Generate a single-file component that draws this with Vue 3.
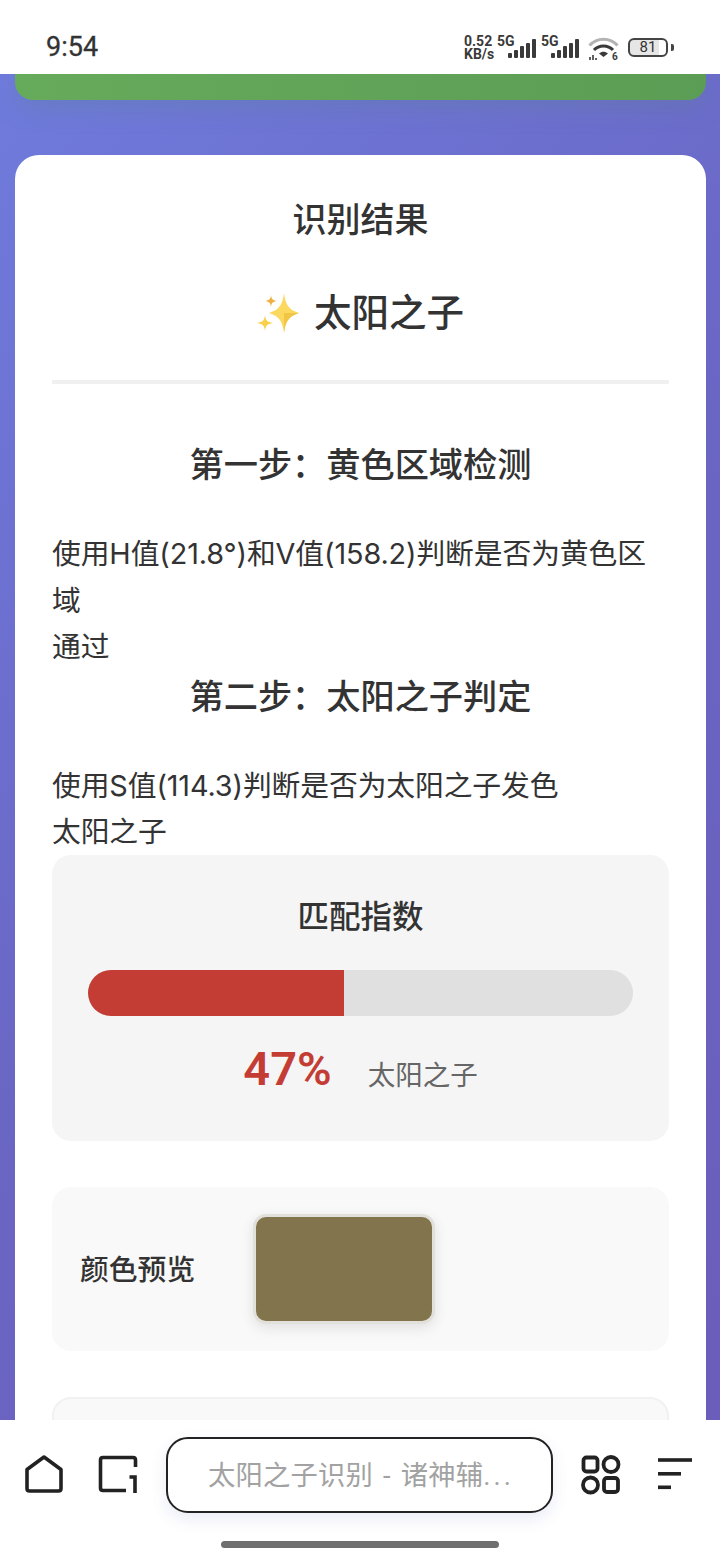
<script setup>
const score = 47
const bars = [
  { x: 0, h: 5 },
  { x: 6, h: 8 },
  { x: 12, h: 12 },
  { x: 18, h: 15 },
  { x: 24, h: 19 },
]
</script>

<template>
  <div class="phone">
    <header class="status">
      <span class="time">9:54</span>
      <div class="sys">
        <span class="speed"><span>0.52</span><span>KB/s</span></span>
        <span class="net">5G</span>
        <svg class="sig sig-first" width="28" height="19" viewBox="0 0 28 19"><rect v-for="b in bars" :key="b.x" :x="b.x" :y="19 - b.h" width="4" :height="b.h" rx="1" fill="#3a3a3a"/></svg>
        <span class="net second">5G</span>
        <svg class="sig" width="28" height="19" viewBox="0 0 28 19"><rect v-for="b in bars" :key="b.x" :x="b.x" :y="19 - b.h" width="4" :height="b.h" rx="1" fill="#3a3a3a"/></svg>
        <svg class="wifi" width="31" height="26" viewBox="0 0 31 26" fill="none">
          <path d="M1.500 8.500C9 0 22 0 29.500 8.500" stroke="#b3b3b3" stroke-width="3"/>
          <path d="M6 13C11 7.500 20 7.500 25 13" stroke="#3a3a3a" stroke-width="3"/>
          <path d="M11 16.500C14 14.200 17 14.200 20 16.500L15.500 20Z" fill="#3a3a3a"/>
          <path d="M2 23v-3M5 23v-5M8 23v-2" stroke="#3a3a3a" stroke-width="1.600"/>
          <text x="24" y="23" class="wifi-six">6</text>
        </svg>
        <span class="battery"><span class="level">81</span></span><span class="cap"></span>
      </div>
    </header>

    <main class="viewport">
      <div class="banner"></div>
      <section class="card">
        <h2 class="title">识别结果</h2>
        <div class="name">
          <svg class="sparkle" width="42" height="40" viewBox="0 0 42 40">
            <path d="M27 0C28.500 11 31 16.500 42 20C31 23.500 28.500 29 27 40C25.500 29 23 23.500 12 20C23 16.500 25.500 11 27 0Z" fill="#fbd95f"/>
            <path d="M27 20H42C31 23.500 28.500 29 27 40Z" fill="#f3c544"/>
            <path d="M8 22C8.800 27.500 10 29 16 30C10 31 8.800 32.500 8 38C7.200 32.500 6 31 0 30C6 29 7.200 27.500 8 22Z" fill="#f8d04a"/>
            <path d="M14 2C14.500 6 15.500 7.300 20 8C15.500 8.700 14.500 10 14 14C13.500 10 12.500 8.700 8 8C12.500 7.300 13.500 6 14 2Z" fill="#eeb045"/>
          </svg>
          <span>太阳之子</span>
        </div>
        <hr class="divider" />

        <h3 class="step first">第一步：黄色区域检测</h3>
        <p class="line lead">使用H值(21.8°)和V值(158.2)判断是否为黄色区域</p>
        <p class="line">通过</p>
        <h3 class="step">第二步：太阳之子判定</h3>
        <p class="line lead">使用S值(114.3)判断是否为太阳之子发色</p>
        <p class="line">太阳之子</p>

        <div class="match">
          <h4 class="match-title">匹配指数</h4>
          <div class="track"><div class="fill" :style="{ width: score + '%' }"></div></div>
          <div class="result">
            <span class="percent">{{ score }}%</span>
            <span class="label">太阳之子</span>
          </div>
        </div>

        <div class="preview">
          <span class="preview-label">颜色预览</span>
          <div class="swatch"></div>
        </div>

        <div class="next"></div>
      </section>
    </main>

    <footer class="dock">
      <div class="tools">
        <svg width="40" height="40" viewBox="0 0 40 40" fill="none" stroke="#222" stroke-width="3.600" stroke-linejoin="round"><path d="M20 2L3 14.500V33.500C3 35.200 4 36 5.500 36H34.500C36 36 37 35.200 37 33.500V14.500Z"/></svg>
        <svg class="tabs" width="40" height="40" viewBox="0 0 40 40" fill="none" stroke="#222" stroke-width="3.600"><path d="M28 35.500H5C3.300 35.500 2.500 34.700 2.500 33V5C2.500 3.300 3.300 2.500 5 2.500H35C36.700 2.500 37.500 3.300 37.500 5V12"/><path d="M31.500 22H37V38"/></svg>
        <div class="url"><span>太阳之子识别 - 诸神辅<span class="dots">...</span></span></div>
        <svg width="40" height="40" viewBox="0 0 40 40" fill="none" stroke="#222" stroke-width="3.800"><rect x="2.500" y="2.500" width="14" height="14" rx="3"/><circle cx="30" cy="9.500" r="7.500"/><circle cx="9.500" cy="30" r="7.500"/><rect x="23" y="23" width="14" height="14" rx="3"/></svg>
        <svg class="menu" width="36" height="36" viewBox="0 0 36 36" fill="#222"><rect x="1" y="1.200" width="34" height="3.600"/><rect x="1" y="15" width="23" height="3.600"/><rect x="1" y="28.500" width="13" height="3.600"/></svg>
      </div>
      <div class="home"></div>
    </footer>
  </div>
</template>

<style scoped>
.phone {
  width: 720px;
  height: 1559px;
  display: flex;
  flex-direction: column;
  overflow: hidden;
  background: #fff;
  font-family: "Roboto", "Noto Sans CJK SC", sans-serif;
  color: #333;
}
.status {
  height: 74px;
  flex: none;
  display: flex;
  align-items: center;
  justify-content: space-between;
  padding: 20px 46px 0;
  background: #fff;
  box-sizing: border-box;
}
.time {
  font-size: 27px;
  font-weight: 400;
  color: #333;
  -webkit-text-stroke: 0.300px #333;
}
.sys {
  height: 24px;
  display: flex;
  align-items: flex-start;
  color: #3a3a3a;
}
.speed {
  display: flex;
  flex-direction: column;
  font-size: 14px;
  line-height: 13px;
  font-weight: 700;
  width: 31px;
}
.net {
  width: 17px;
  margin-left: 2px;
  font-size: 14px;
  line-height: 13px;
  font-weight: 700;
  white-space: nowrap;
}
.second { margin-left: 5px; }
.sig {
  margin-top: 4px;
  margin-left: -7px;
}
.sig-first { margin-left: -6px; }
.wifi {
  margin-left: 9px;
  margin-top: 2px;
  flex: none;
}
.wifi-six {
  font-size: 10px;
  font-weight: 700;
  fill: #3a3a3a;
}
.battery {
  width: 40px;
  height: 19px;
  margin-left: 9px;
  margin-top: 3px;
  border: 2px solid #444;
  border-radius: 6px;
  box-sizing: border-box;
  display: flex;
  justify-content: center;
  align-items: center;
  background: linear-gradient(90deg, #e6e6e6 81%, #fff 81%);
}
.level {
  font-size: 15px;
  line-height: 15px;
  color: #333;
}
.cap {
  width: 3px;
  height: 7px;
  margin: 9px 0 0 3px;
  border-radius: 0 2px 2px 0;
  background: #444;
}
.viewport {
  flex: 1;
  min-height: 0;
  overflow: hidden;
  padding: 0 14px 0 15px;
  background: linear-gradient(135deg, #6f7bdc 0%, #6a66c4 50%, #6b5dba 100%);
}
.banner {
  height: 26px;
  border-radius: 0 0 18px 18px;
  background: linear-gradient(90deg, #66aa5b, #5c9d55);
  box-shadow: 0 8px 24px rgba(90, 130, 140, 0.300);
}
.card {
  margin-top: 55px;
  padding: 39px 37px 0;
  background: #fff;
  border-radius: 24px 24px 0 0;
  min-height: 1300px;
  box-sizing: border-box;
}
.title {
  margin: 0;
  text-align: center;
  font-size: 34px;
  line-height: 52px;
  font-weight: 500;
  color: #333;
}
.name {
  margin-top: 37px;
  display: flex;
  justify-content: center;
  align-items: center;
  gap: 15px;
  font-size: 37.500px;
  line-height: 60px;
  font-weight: 500;
}
.divider {
  margin: 37px 0 0;
  height: 4px;
  border: 0;
  background: #f0f0f0;
}
.step {
  margin: 0;
  text-align: center;
  font-size: 34.200px;
  line-height: 52px;
  font-weight: 500;
  color: #333;
}
.first { margin-top: 55px; }
.line {
  margin: 0;
  font-family: "Inter", "Noto Sans CJK SC", sans-serif;
  font-size: 28.800px;
  letter-spacing: -0.120px;
  line-height: 46.500px;
  color: #333;
}
.lead { margin-top: 40px; }
.match {
  margin-top: -1px;
  height: 286px;
  padding: 38px 36px 0;
  background: #f5f5f5;
  border-radius: 19px;
  box-sizing: border-box;
}
.match-title {
  margin: 0;
  text-align: center;
  font-size: 31.500px;
  line-height: 50px;
  font-weight: 500;
}
.track {
  margin-top: 27px;
  height: 46px;
  border-radius: 23px;
  background: #e0e0e0;
  overflow: hidden;
}
.fill {
  height: 100%;
  background: #c43d35;
}
.result {
  margin-top: 23px;
  display: flex;
  justify-content: center;
  align-items: baseline;
  gap: 36px;
}
.percent {
  font-size: 47px;
  line-height: 60px;
  font-weight: 600;
  color: #c43d35;
}
.label {
  font-size: 27.500px;
  color: #666;
}
.preview {
  margin-top: 46px;
  height: 164px;
  padding: 0 28px;
  display: flex;
  align-items: center;
  gap: 61px;
  background: #f9f9f9;
  border-radius: 19px;
  box-sizing: border-box;
}
.preview-label {
  font-size: 28.800px;
  font-weight: 500;
  color: #333;
  padding-bottom: 3px;
}
.swatch {
  width: 176px;
  height: 104px;
  margin-left: -3px;
  border: 3px solid #e2e0da;
  border-radius: 13px;
  background: #82744c;
  box-sizing: content-box;
  box-shadow: 0 4px 14px rgba(0, 0, 0, 0.100);
}
.next {
  margin-top: 46px;
  height: 120px;
  background: #f9f9f9;
  border: 2px solid #f1f1f1;
  border-radius: 19px;
}
.dock {
  height: 139px;
  flex: none;
  background: #fff;
  position: relative;
  z-index: 1;
}
.tools {
  display: flex;
  align-items: center;
  padding: 17px 26px 0 24px;
}
.tabs { margin-left: 34px; }
.url {
  width: 387px;
  height: 76px;
  margin: 0 28px;
  padding: 0 0 4px 3px;
  flex: none;
  box-sizing: border-box;
  border: 2px solid #222;
  border-radius: 22px;
  background: #fff;
  box-shadow: 0 6px 16px rgba(80, 90, 180, 0.120);
  display: flex;
  align-items: center;
  justify-content: center;
  font-size: 27.300px;
  word-spacing: 3px;
  letter-spacing: 0.200px;
  color: #a2a2a2;
  white-space: nowrap;
}
.dots { letter-spacing: 3px; }
.menu { margin-left: 36px; }
.home {
  width: 278px;
  height: 7px;
  margin: 28px auto 0;
  border-radius: 4px;
  background: #6f6f6f;
}
</style>
